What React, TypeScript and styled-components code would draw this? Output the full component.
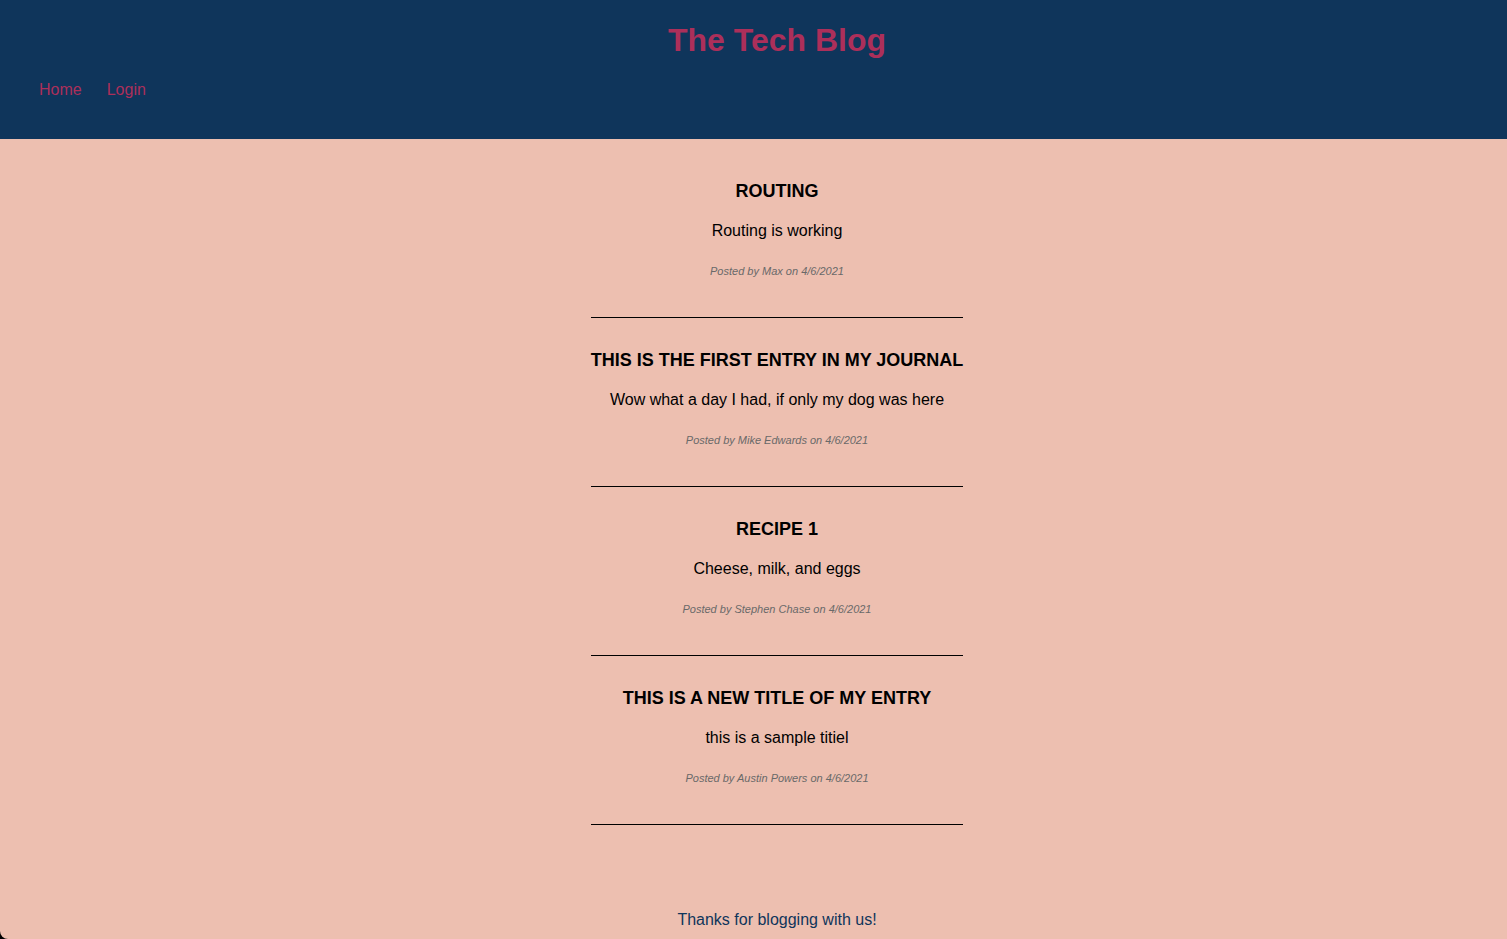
import React from 'react';
import styled, { createGlobalStyle } from 'styled-components';

const GlobalStyle = createGlobalStyle`
  *, *::before, *::after { box-sizing: border-box; }
  html { background: #000; }
  body {
    margin: 0;
    font-family: Arial, "Liberation Sans", sans-serif;
    font-size: 16px;
    line-height: 18px;
    background: #000;
    color: #000;
  }
`;

const Page = styled.div`
  display: flex;
  flex-direction: column;
  min-height: 100vh;
  background: #edbfb0;
  border-bottom-left-radius: 8px;
`;

const Header = styled.header`
  padding: 22px 0 40px;
  background: #0f355b;
`;

const SiteTitle = styled.h1`
  margin: 0;
  padding-left: 47px;
  font-size: 32px;
  line-height: 36px;
  text-align: center;
  color: #ac2f5a;
`;

const Nav = styled.nav`
  display: flex;
  gap: 25px;
  margin-top: 23px;
  padding-left: 39px;
`;

const NavLink = styled.a`
  color: #ac2f5a;
  text-decoration: none;
`;

const Main = styled.main`
  display: flex;
  justify-content: center;
  padding: 10px 0 0 47px;
`;

const PostList = styled.div`
  display: flex;
  flex-direction: column;
`;

const Post = styled.article`
  padding: 32px 0 38px;
  border-bottom: 1px solid #000;
  text-align: center;
`;

const PostTitle = styled.h2`
  margin: 0;
  font-size: 18px;
  line-height: 20px;
  text-transform: uppercase;
`;

const PostBody = styled.p`
  margin: 21px 0 23px;
`;

const Byline = styled.p`
  margin: 0;
  font-size: 11px;
  line-height: 16px;
  font-style: italic;
  color: #696969;
`;

const Footer = styled.footer`
  margin-top: auto;
  padding: 84px 0 10px 47px;
  text-align: center;
  color: #0f355b;
`;

const posts = [
  { title: 'Routing', body: 'Routing is working', author: 'Max', date: '4/6/2021' },
  {
    title: 'This is the first entry in my journal',
    body: 'Wow what a day I had, if only my dog was here',
    author: 'Mike Edwards',
    date: '4/6/2021',
  },
  { title: 'Recipe 1', body: 'Cheese, milk, and eggs', author: 'Stephen Chase', date: '4/6/2021' },
  {
    title: 'This is a new title of my entry',
    body: 'this is a sample titiel',
    author: 'Austin Powers',
    date: '4/6/2021',
  },
];

export default function App() {
  return (
    <>
      <GlobalStyle />
      <Page>
        <Header>
          <SiteTitle>The Tech Blog</SiteTitle>
          <Nav>
            <NavLink href="#home">Home</NavLink>
            <NavLink href="#login">Login</NavLink>
          </Nav>
        </Header>
        <Main>
          <PostList>
            {posts.map((post) => (
              <Post key={post.title}>
                <PostTitle>{post.title}</PostTitle>
                <PostBody>{post.body}</PostBody>
                <Byline>
                  Posted by {post.author} on {post.date}
                </Byline>
              </Post>
            ))}
          </PostList>
        </Main>
        <Footer>Thanks for blogging with us!</Footer>
      </Page>
    </>
  );
}
